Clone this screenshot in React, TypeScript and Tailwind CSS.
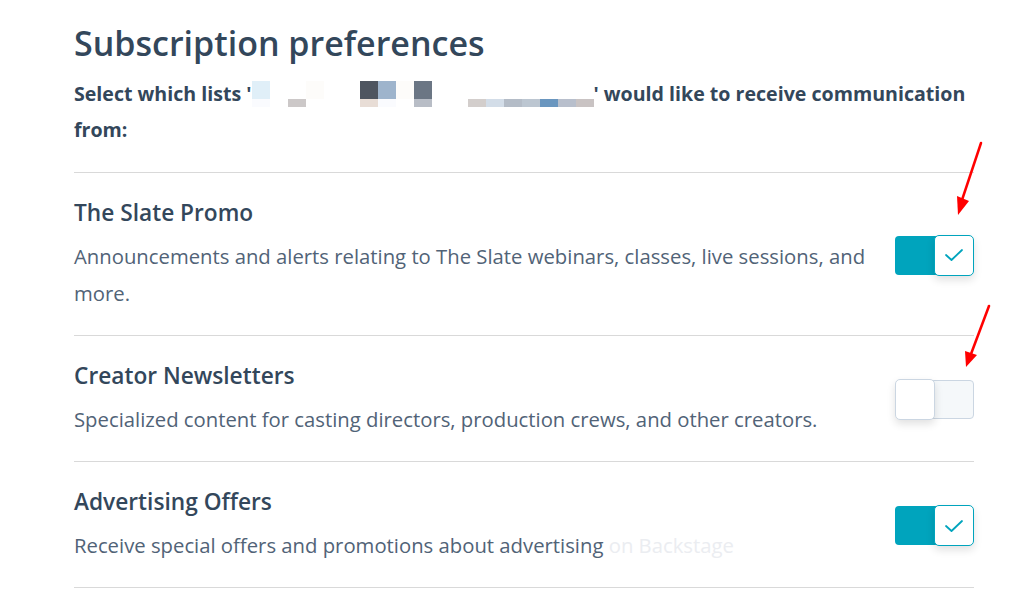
import React from "react";

const upperRow = [
  "bg-[#e0eff8]", "bg-transparent", "bg-transparent", "bg-[#fdfcfa]", "bg-transparent", "bg-transparent",
  "bg-[#4e5560]", "bg-[#9eb4cc]", "bg-[#fdfcfa]", "bg-[#6b7684]",
];
const lowerRow = [
  "bg-[#fafbfe]", "bg-transparent", "bg-[#ccc8c8]", "bg-transparent", "bg-transparent", "bg-transparent",
  "bg-[#e8ddd6]", "bg-[#fafbfe]", "bg-transparent", "bg-[#b8bdc6]", "bg-transparent", "bg-transparent",
  "bg-[#d3cecc]", "bg-[#d3dde8]", "bg-[#b4bcc7]", "bg-[#bcc6d1]", "bg-[#6a96bf]", "bg-[#b8bfcc]", "bg-[#c9c3c3]",
];

function Redacted() {
  return (
    <span className="inline-flex flex-col w-[342px] h-[26px] align-top mt-[5px]">
      <span className="flex h-[18px]">
        {upperRow.map((c, i) => (
          <span key={i} className={`w-[18px] h-[18px] shrink-0 ${c}`} />
        ))}
      </span>
      <span className="flex h-[8px]">
        {lowerRow.map((c, i) => (
          <span key={i} className={`w-[18px] h-[8px] shrink-0 ${c}`} />
        ))}
      </span>
    </span>
  );
}

function Check() {
  return (
    <svg width="20" height="14" viewBox="0 0 20 14" fill="none">
      <path d="M2 7 L7.5 12 L18 2" stroke="#00a4bd" strokeWidth="1.8" strokeLinecap="round" strokeLinejoin="round" />
    </svg>
  );
}

function Toggle({ on }: { on: boolean }) {
  if (on) {
    return (
      <div className="flex items-center w-[79px] h-[41px] shrink-0">
        <div className="w-[42px] h-[39px] bg-[#00a4bd] rounded-l-[4px] -mr-[3px]" />
        <div className="relative w-[40px] h-[41px] bg-white border border-[#00a4bd] rounded-[5px] flex items-center justify-center shadow-[0_4px_8px_rgba(0,0,0,0.12)]">
          <Check />
        </div>
      </div>
    );
  }
  return (
    <div className="flex items-center w-[79px] h-[41px] shrink-0">
      <div className="relative z-10 w-[40px] h-[41px] bg-white border border-[#cbd6e2] rounded-[5px] shadow-[0_4px_8px_rgba(0,0,0,0.12)]" />
      <div className="w-[42px] h-[39px] -ml-[3px] bg-[#f5f8fa] border border-[#cbd6e2] rounded-r-[4px]" />
    </div>
  );
}

function Row({ title, desc, on }: { title: string; desc: React.ReactNode; on: boolean }) {
  return (
    <div className="flex items-center border-b border-[#d9d9d9] pt-[25px] pb-[23px]">
      <div className="flex-1 pr-[20px]">
        <div className="text-[22.7px] leading-[30px] font-semibold text-[#33475b]">{title}</div>
        <div className="mt-[10px] text-[20.3px] leading-[37px] text-[#516377]">{desc}</div>
      </div>
      <Toggle on={on} />
    </div>
  );
}

export default function App() {
  return (
    <div className="relative w-[1026px] h-[606px] bg-white overflow-hidden" style={{ fontFamily: "'Open Sans', 'Noto Sans', sans-serif" }}>
      <div className="pl-[74px] w-[974px]">
        <h1 className="pt-[21px] text-[34px] leading-[44px] font-semibold text-[#33475b]">Subscription preferences</h1>
        <p className="mt-[11px] text-[19.6px] leading-[36px] font-bold text-[#33475b]">
          <span className="whitespace-nowrap">
            <span>Select which lists '</span>
            <Redacted />
            <span>' would like to receive communication</span>
          </span>
          <br />
          <span>from:</span>
        </p>
        <div className="mt-[24px] border-t border-[#d9d9d9]">
          <Row
            title="The Slate Promo"
            desc="Announcements and alerts relating to The Slate webinars, classes, live sessions, and more."
            on={true}
          />
          <Row
            title="Creator Newsletters"
            desc="Specialized content for casting directors, production crews, and other creators."
            on={false}
          />
          <Row
            title="Advertising Offers"
            desc={
              <>
                Receive special offers and promotions about advertising{" "}
                <span className="text-[#ebedf1]">on Backstage</span>
              </>
            }
            on={true}
          />
        </div>
      </div>
      <svg className="absolute left-[950px] top-[138px]" width="40" height="82" viewBox="0 0 40 82">
        <path d="M31 5 L12 62" stroke="#ff0000" strokeWidth="2.5" strokeLinecap="round" />
        <polygon points="7,58 19,63 8,77" fill="#ff0000" />
      </svg>
      <svg className="absolute left-[958px] top-[302px]" width="40" height="70" viewBox="0 0 40 70">
        <path d="M31 4 L13 52" stroke="#ff0000" strokeWidth="2.5" strokeLinecap="round" />
        <polygon points="7,49 19,53 8,65" fill="#ff0000" />
      </svg>
    </div>
  );
}
